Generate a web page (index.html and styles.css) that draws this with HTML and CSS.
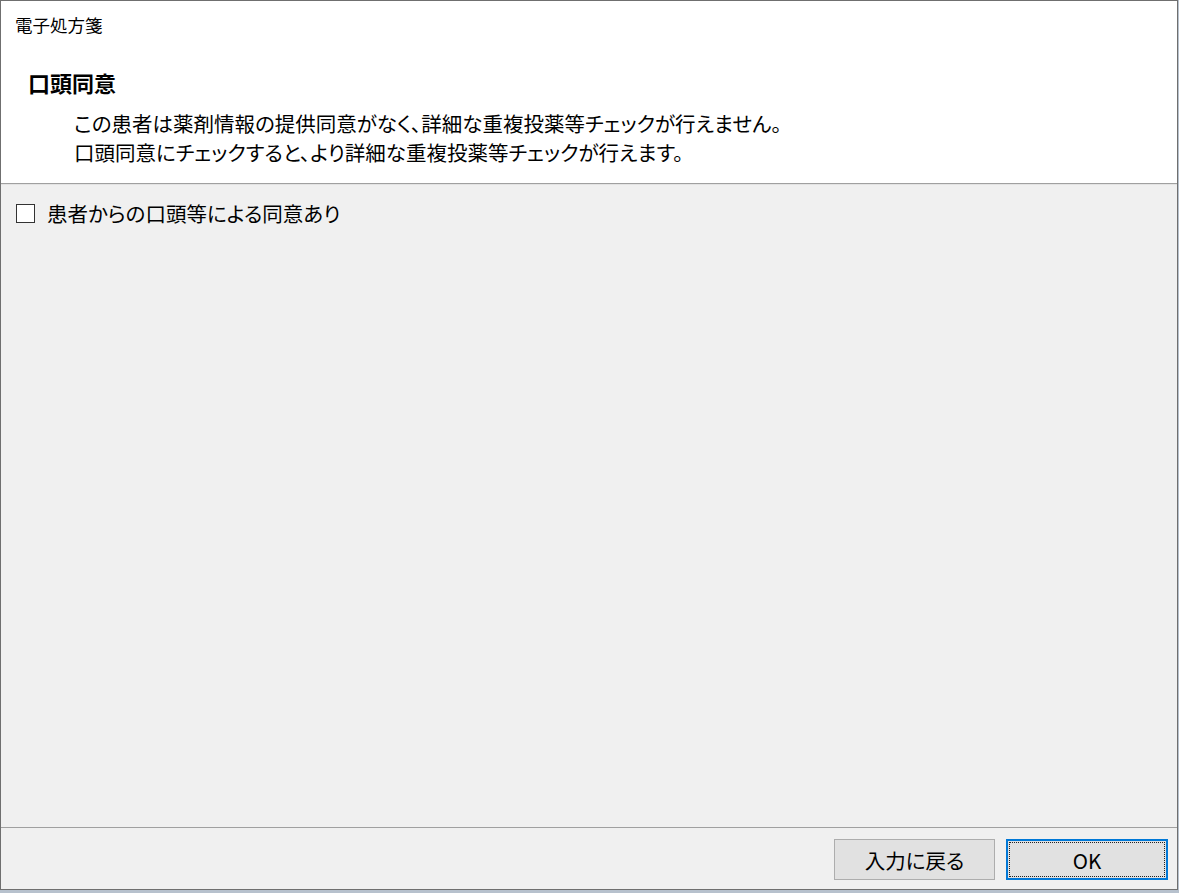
FILE: index.html
```html
<!DOCTYPE html>
<html lang="ja">
<head>
<meta charset="utf-8">
<title>電子処方箋</title>
<link rel="stylesheet" href="styles.css">
</head>
<body>
<div class="window">
  <div class="titlebar">電子処方箋</div>
  <div class="header">
    <div class="heading">口頭同意</div>
    <p class="desc">この患者は薬剤情報の提供同意がなく、詳細な重複投薬等チェックが行えません。<br>口頭同意にチェックすると、より詳細な重複投薬等チェックが行えます。</p>
  </div>
  <div class="content">
    <label class="check-row"><span class="checkbox"></span><span class="check-label">患者からの口頭等による同意あり</span></label>
  </div>
  <div class="footer">
    <button class="btn">入力に戻る</button>
    <button class="btn btn-default">OK</button>
  </div>
</div>
</body>
</html>
```

FILE: styles.css
```css
html, body {
  margin: 0;
  padding: 0;
}
body {
  width: 1179px;
  height: 893px;
  background: #b7c1cd;
  font-family: "Noto Sans CJK JP", "Noto Sans", sans-serif;
  color: #000;
  overflow: hidden;
}
.window {
  box-sizing: border-box;
  width: 1178px;
  height: 890px;
  border: 1px solid #6f6f6f;
  background: #f0f0f0;
  display: flex;
  flex-direction: column;
}
.titlebar {
  background: #fff;
  height: 48px;
  line-height: 48px;
  padding-left: 14px;
  font-size: 17.5px;
  font-feature-settings: "palt";
}
.header {
  background: #fff;
  padding: 19px 0 16px 27px;
  border-bottom: 1px solid #a0a0a0;
  box-shadow: 0 1px 0 #e3e3e3;
}
.heading {
  font-size: 22px;
  font-weight: bold;
  line-height: 28px;
  font-feature-settings: "palt";
}
.desc {
  margin: 13px 0 0 46px;
  font-size: 20.5px;
  line-height: 29px;
  font-feature-settings: "palt";
}
.content {
  flex: 1;
  padding: 15px 0 0 15px;
}
.check-row {
  display: flex;
  align-items: center;
  gap: 12px;
  height: 28px;
}
.checkbox {
  box-sizing: border-box;
  width: 19px;
  height: 19px;
  border: 1px solid #333;
  background: #fff;
}
.check-label {
  font-size: 20.5px;
  font-feature-settings: "palt";
}
.footer {
  border-top: 1px solid #a0a0a0;
  padding: 11px 9px 9px 0;
  display: flex;
  justify-content: flex-end;
  gap: 11px;
}
.btn {
  box-sizing: border-box;
  width: 161px;
  height: 41px;
  background: #e1e1e1;
  border: 1px solid #adadad;
  font-family: "Noto Sans CJK JP", "Noto Sans", sans-serif;
  font-size: 20.5px;
  color: #000;
  padding: 0;
  font-feature-settings: "palt";
}
.btn-default {
  position: relative;
  border: 2px solid #0078d7;
  width: 162px;
}
.btn-default::after {
  content: "";
  position: absolute;
  inset: 1px;
  border: 1px dotted #222;
}
```
